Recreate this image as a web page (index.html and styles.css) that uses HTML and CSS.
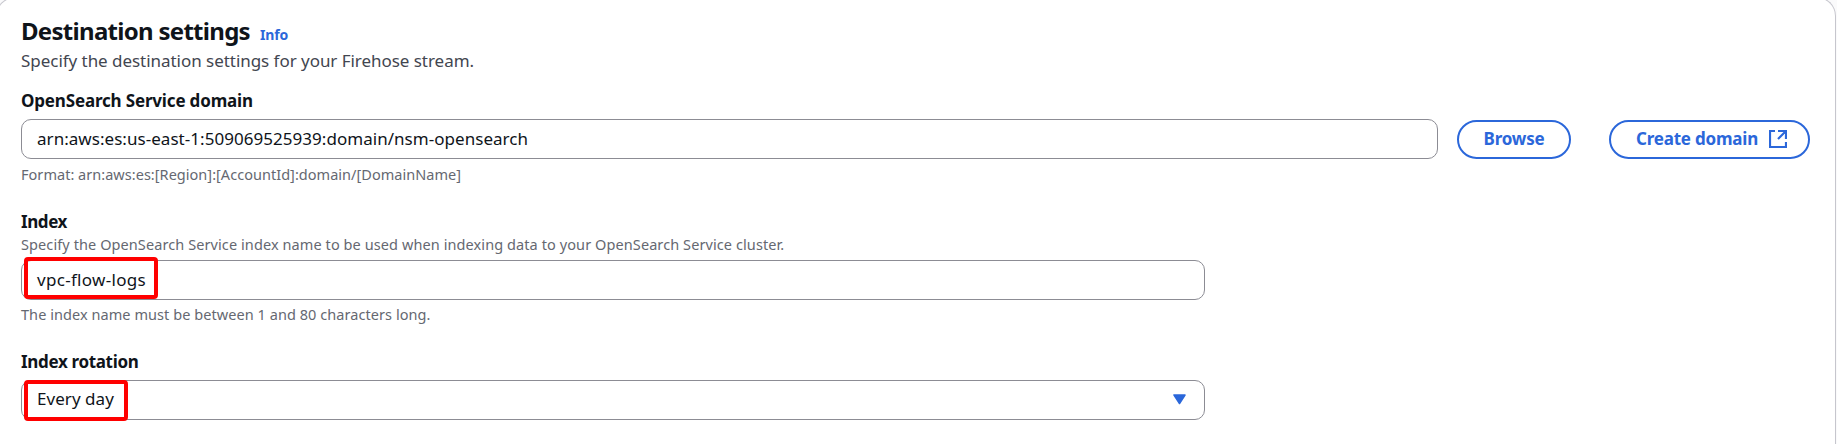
FILE: index.html
```html
<!DOCTYPE html>
<html lang="en">
<head>
<meta charset="utf-8">
<title>Destination settings</title>
<link rel="stylesheet" href="styles.css">
</head>
<body>
<section class="card">
  <header class="header">
    <div class="title-row"><h2 class="title">Destination settings</h2><a class="info">Info</a></div>
    <p class="subtitle">Specify the destination settings for your Firehose stream.</p>
  </header>
  <div class="field field-domain">
    <label class="label label-domain">OpenSearch Service domain</label>
    <div class="control-row">
      <div class="input input-domain"><span class="arn">arn:aws:es:us-east-1:509069525939:domain/nsm-opensearch</span></div>
      <button class="button browse">Browse</button>
      <button class="button create">Create domain
        <svg class="external" viewBox="0 0 18 18" width="18" height="18"><path d="M6 1H1v16h16v-5M9 1h8v8M16.5 1.500L9 9"/></svg>
      </button>
    </div>
    <p class="hint format">Format: arn:aws:es:[Region]:[AccountId]:domain/[DomainName]</p>
  </div>
  <div class="field field-index">
    <label class="label label-index">Index</label>
    <p class="hint description">Specify the OpenSearch Service index name to be used when indexing data to your OpenSearch Service cluster.</p>
    <div class="input"><span class="index-name">vpc-flow-logs</span><i class="mark mark-index"></i></div>
    <p class="hint constraint">The index name must be between 1 and 80 characters long.</p>
  </div>
  <div class="field field-rotation">
    <label class="label label-rotation">Index rotation</label>
    <div class="input select"><span class="period">Every day</span>
      <svg class="caret" viewBox="0 0 13 11" width="13" height="11"><path d="M1 1h11L6.500 9.500z"/></svg>
      <i class="mark mark-rotation"></i>
    </div>
  </div>
</section>
</body>
</html>
```
FILE: styles.css
```css
* { box-sizing: border-box; }
body {
  margin: 0;
  height: 444px;
  overflow: hidden;
  background: #fafafb;
  font: 17px/24px "Noto Sans", "Open Sans", sans-serif;
  color: #0f141a;
}
h2, p { margin: 0; }
.card {
  width: 1840px;
  height: 447px;
  margin: -3px 0 0 -4px;
  padding: 18px 25px 0 24px;
  border: 1px solid #c6c6cd;
  border-bottom: 0;
  border-radius: 19px 19px 0 0;
  background: #fff;
}
.header { height: 73px; }
.title-row { display: flex; align-items: baseline; gap: 10px; height: 33px; }
.title { font-size: 24px; line-height: 30px; font-weight: 700; letter-spacing: -.71px; }
.info { font-size: 14px; font-weight: 700; color: #2b67da; letter-spacing: -.1px; }
.subtitle { color: #424650; letter-spacing: -.04px; }
.label { display: block; font-weight: 700; white-space: nowrap; }
.label-domain { letter-spacing: -.17px; }
.label-index { letter-spacing: -.4px; }
.label-rotation { letter-spacing: -.33px; }
.field-domain { height: 121px; }
.field-index { height: 140px; }
.control-row { display: flex; align-items: flex-end; margin-top: 6px; }
.input {
  position: relative;
  display: flex;
  align-items: center;
  width: 1184px;
  height: 40px;
  padding: 0 15px 0 15px;
  border: 1px solid #8c8c94;
  border-radius: 10px;
  background: #fff;
}
.input-domain { width: 1417px; }
.arn { letter-spacing: .04px; }
.index-name { letter-spacing: .3px; }
.period { letter-spacing: .05px; padding-bottom: 2px; }
.button {
  display: flex;
  align-items: center;
  justify-content: center;
  height: 39px;
  padding: 0 0 1px;
  border: 2px solid #2b67da;
  border-radius: 20px;
  background: #fff;
  color: #2b67da;
  font: inherit;
  font-weight: 700;
  letter-spacing: -.2px;
}
.browse { width: 114px; margin-left: 19px; }
.create { width: 201px; margin-left: 38px; padding-left: 4px; gap: 11px; }
.external { fill: none; stroke: currentColor; stroke-width: 2.200; }
.hint { font-size: 14.5px; line-height: 20px; color: #656871; }
.format { margin-top: 5px; letter-spacing: .03px; }
.description { margin-bottom: 6px; letter-spacing: .09px; }
.constraint { margin-top: 4px; letter-spacing: .06px; }
.select { margin-top: 6px; padding-bottom: 1px; justify-content: space-between; }
.caret { margin-right: 3px; fill: #2b67da; stroke: #2b67da; stroke-width: 1.500; stroke-linejoin: round; }
/* highlight frames over the entered values */
.mark { position: absolute; left: 2px; border: 4px solid #f00; border-radius: 4px; }
.mark-index { top: -4px; width: 134px; height: 42px; }
.mark-rotation { top: -1px; width: 104px; height: 41px; }
```
